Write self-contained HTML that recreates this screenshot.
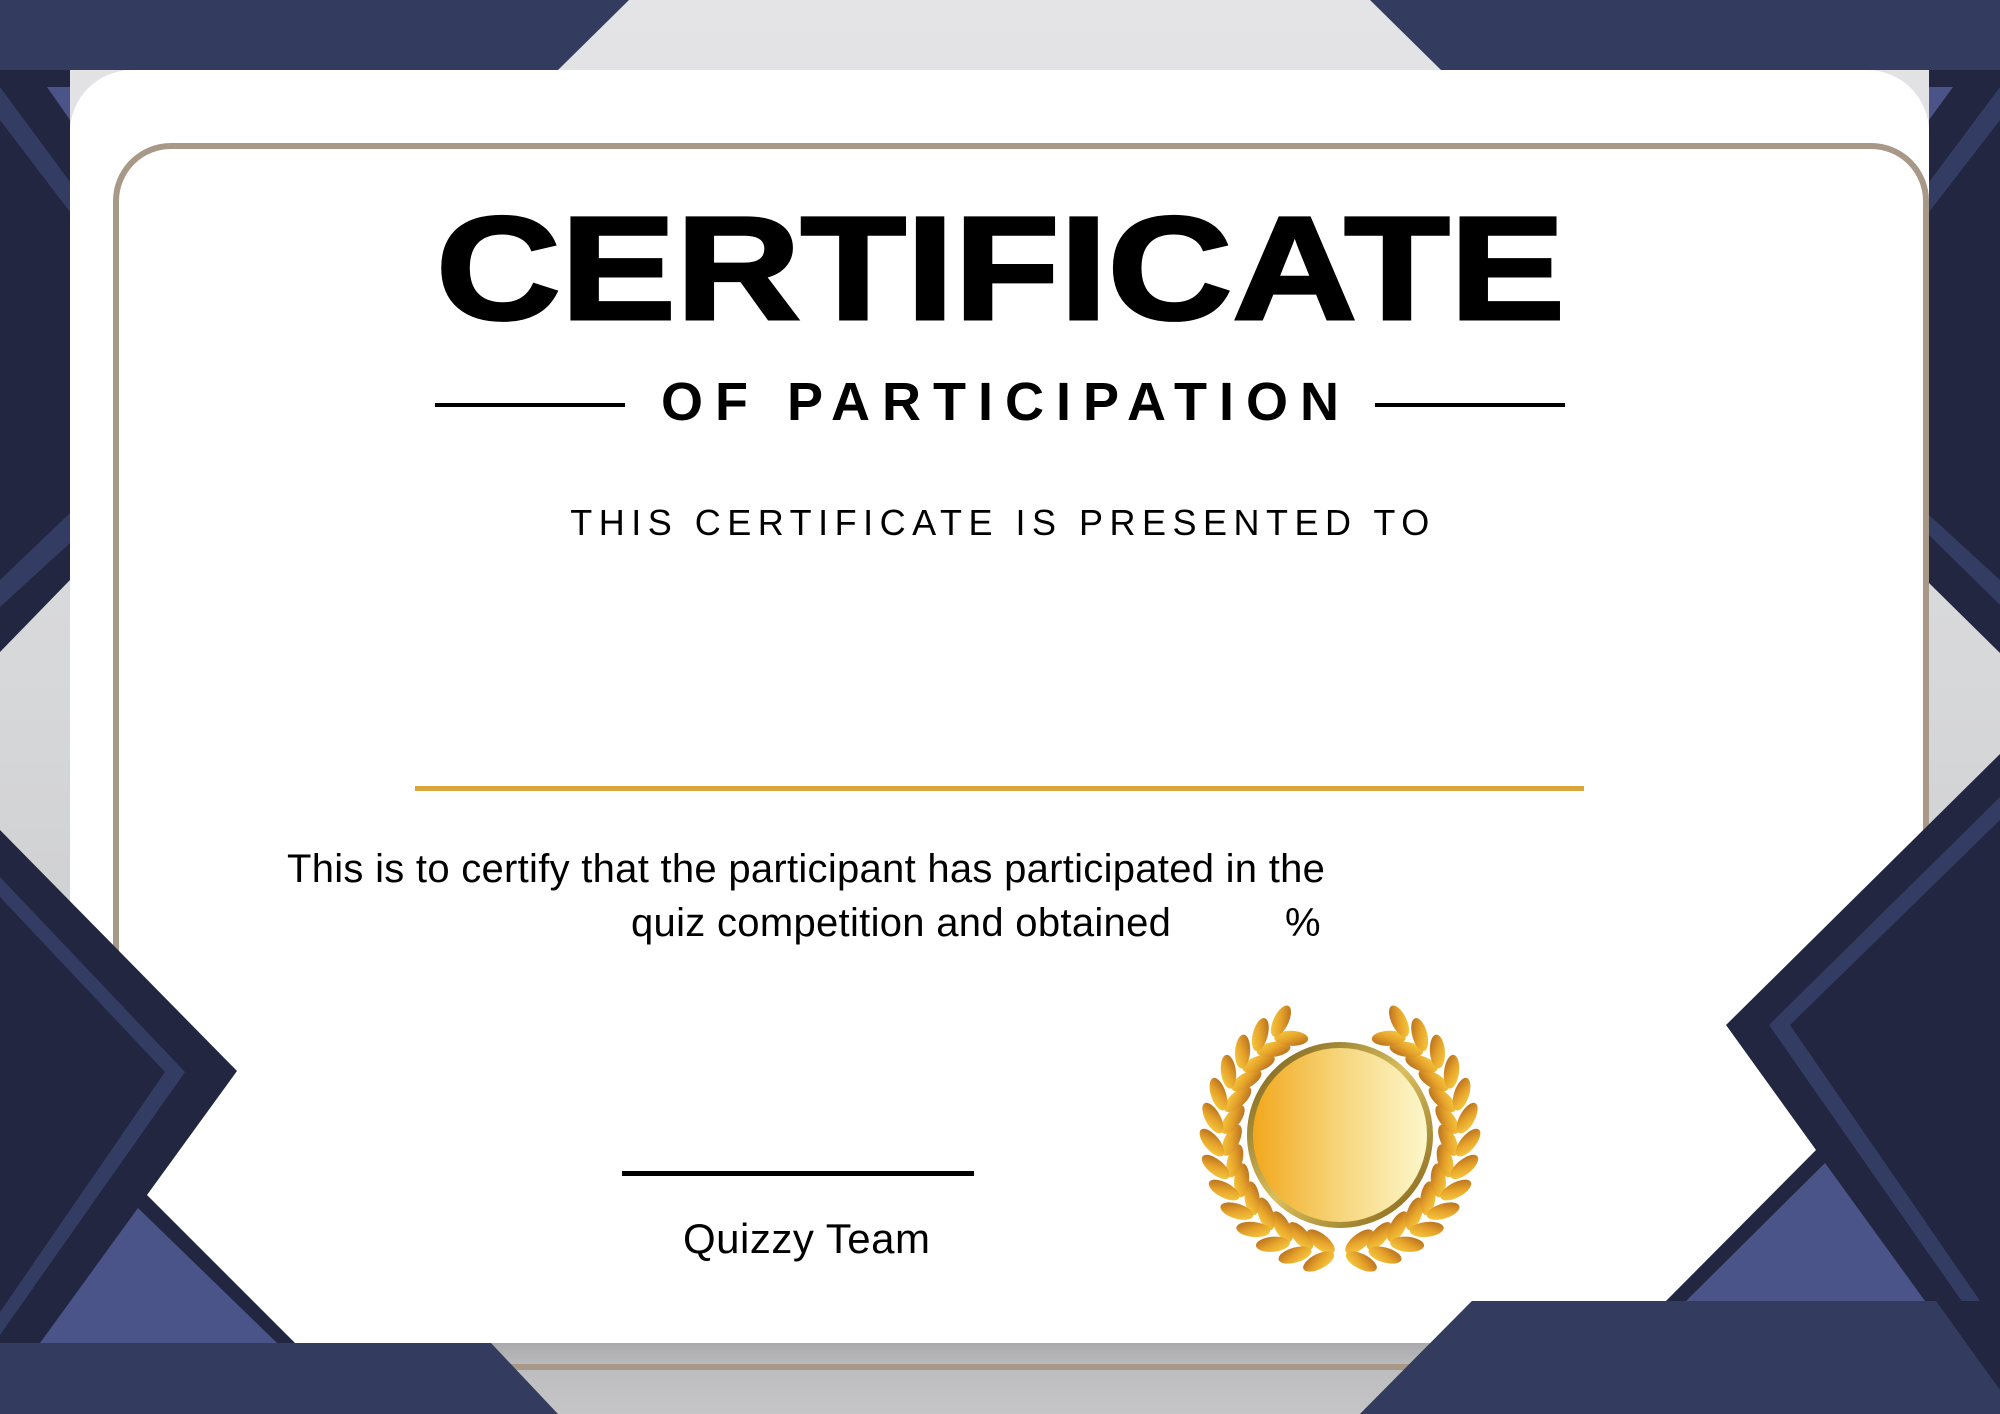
<!DOCTYPE html>
<html><head><meta charset="utf-8">
<style>
html,body{margin:0;padding:0;}
body{width:2000px;height:1414px;position:relative;overflow:hidden;font-family:"Liberation Sans",Arial,sans-serif;color:#000;
background:linear-gradient(180deg,#e4e4e6 0%,#d6d7d9 50%,#c2c2c4 100%);}
.abs{position:absolute;white-space:nowrap;line-height:1;}
svg{position:absolute;left:0;top:0;}
</style></head>
<body>
<svg width="2000" height="1414" viewBox="0 0 2000 1414">
  <defs>
    <linearGradient id="sh" x1="0" y1="0" x2="0" y2="1">
      <stop offset="0" stop-color="#a4a4a6"/><stop offset="0.4" stop-color="#bcbcbe"/><stop offset="1" stop-color="#c6c6c8"/>
    </linearGradient>
  </defs>
  <rect x="0" y="1335" width="2000" height="79" fill="url(#sh)"/>
  <polygon points="0,0 629,0 558,70 0,70" fill="#333c5f"/>
  <polygon points="1370,0 2000,0 2000,70 1441,70" fill="#333c5f"/>
  <polygon points="0,70 70,70 70,580 0,652" fill="#222640"/>
  <polygon points="0,87 0,120 70,212 70,182" fill="#333c62"/>
  <polygon points="47,87 70,87 70,120" fill="#4b5488"/>
  <polygon points="0,580 70,513 70,543 0,607" fill="#333c62"/>
  <polygon points="1929,70 2000,70 2000,653 1929,583" fill="#222640"/>
  <polygon points="2000,87 2000,120 1929,212 1929,182" fill="#333c62"/>
  <polygon points="1953,87 1929,87 1929,120" fill="#4b5488"/>
  <polygon points="1929,515 1929,535 2000,605 2000,580" fill="#333c62"/>
</svg>

<div style="position:absolute;left:70px;top:70px;width:1859px;height:1273px;background:#fff;border-radius:62px 62px 0 0;"></div>
<div style="position:absolute;left:113px;top:143px;width:1804px;height:1215px;border:6px solid #a89888;border-radius:58px;"></div>

<div class="abs" style="left:0;width:2000px;top:196px;text-align:center;font-size:147px;font-weight:bold;">
  <span style="display:inline-block;transform:scaleX(1.175);transform-origin:center;-webkit-text-stroke:3px #000;">CERTIFICATE</span>
</div>
<div style="position:absolute;left:435px;top:403px;width:190px;height:4px;background:#000;"></div>
<div style="position:absolute;left:1375px;top:403px;width:190px;height:4px;background:#000;"></div>
<div class="abs" style="left:0;width:2000px;top:375px;text-align:center;font-size:54px;font-weight:bold;letter-spacing:12px;text-indent:12px;">OF PARTICIPATION</div>
<div class="abs" style="left:0;width:2000px;top:505px;text-align:center;font-size:36px;letter-spacing:6.5px;text-indent:6px;">THIS CERTIFICATE IS PRESENTED TO</div>

<div style="position:absolute;left:415px;top:786px;width:1169px;height:5px;background:#d8a63a;"></div>

<div class="abs" style="left:287px;top:849px;font-size:40px;letter-spacing:0.28px;">This is to certify that the participant has participated in the</div>
<div class="abs" style="left:631px;top:903px;font-size:40px;letter-spacing:0.3px;">quiz competition and obtained</div>
<div class="abs" style="left:1285px;top:903px;font-size:40px;">%</div>

<div style="position:absolute;left:622px;top:1171px;width:352px;height:5px;background:#000;"></div>
<div class="abs" style="left:683px;top:1218px;font-size:42px;letter-spacing:0.5px;">Quizzy Team</div>

<svg width="2000" height="1414" viewBox="0 0 2000 1414">
  <defs>
    <linearGradient id="leaf" x1="0" y1="0" x2="1" y2="1">
      <stop offset="0" stop-color="#a9621c"/><stop offset="0.5" stop-color="#e6a22a"/><stop offset="1" stop-color="#f9d445"/>
    </linearGradient>
    <linearGradient id="ring" x1="0" y1="0" x2="1" y2="1">
      <stop offset="0" stop-color="#6e5410"/><stop offset="0.5" stop-color="#d9bf5e"/><stop offset="1" stop-color="#7a5a10"/>
    </linearGradient>
    <linearGradient id="coin" x1="0" y1="0" x2="1" y2="0">
      <stop offset="0" stop-color="#f2a81d"/><stop offset="0.5" stop-color="#f6d67c"/><stop offset="1" stop-color="#fdf7cc"/>
    </linearGradient>
    <g id="lp">
      <ellipse cx="-8" cy="108" rx="17" ry="7.5" transform="rotate(33 -8 108)" fill="url(#leaf)"/>
      <ellipse cx="-8" cy="128" rx="17" ry="7.5" transform="rotate(-33 -8 128)" fill="url(#leaf)"/>
    </g>
    <g id="half">
      <use href="#lp" transform="rotate(6)"/>
      <use href="#lp" transform="rotate(17)"/>
      <use href="#lp" transform="rotate(28)"/>
      <use href="#lp" transform="rotate(39)"/>
      <use href="#lp" transform="rotate(50)"/>
      <use href="#lp" transform="rotate(61)"/>
      <use href="#lp" transform="rotate(72)"/>
      <use href="#lp" transform="rotate(83)"/>
      <use href="#lp" transform="rotate(94)"/>
      <use href="#lp" transform="rotate(105)"/>
      <use href="#lp" transform="rotate(116)"/>
      <use href="#lp" transform="rotate(127)"/>
      <use href="#lp" transform="rotate(138)"/>
      <use href="#lp" transform="rotate(149)"/>
    </g>
  </defs>
  <g transform="translate(1340 1135)">
    <use href="#half"/>
    <g transform="scale(-1 1)"><use href="#half"/></g>
    <circle r="93" fill="url(#ring)"/>
    <circle r="87" fill="url(#coin)"/>
  </g>
</svg>

<svg width="2000" height="1414" viewBox="0 0 2000 1414">
  <polygon points="0,830 237,1071 147,1195 295,1343 0,1343" fill="#222640"/>
  <polygon points="0,877 185,1072 0,1335 0,1312 165,1072 0,897" fill="#333c62"/>
  <polygon points="138,1208 277,1343 40,1343" fill="#4b5488"/>
  <polygon points="0,1343 491,1343 558,1414 0,1414" fill="#333c5f"/>
  <polygon points="2000,754 1726,1025 1816,1150 1666,1301 2000,1301" fill="#222640"/>
  <polygon points="2000,797 1769,1025 2000,1356 2000,1330 1790,1025 2000,820" fill="#333c62"/>
  <polygon points="1825,1163 1686,1301 1925,1301" fill="#4b5488"/>
  <polygon points="1936,1301 2000,1301 2000,1414 1360,1414 1472,1301" fill="#222640"/>
  <polygon points="1472,1301 1936,1301 2000,1390 2000,1414 1360,1414" fill="#333c5f"/>
</svg>
</body></html>
